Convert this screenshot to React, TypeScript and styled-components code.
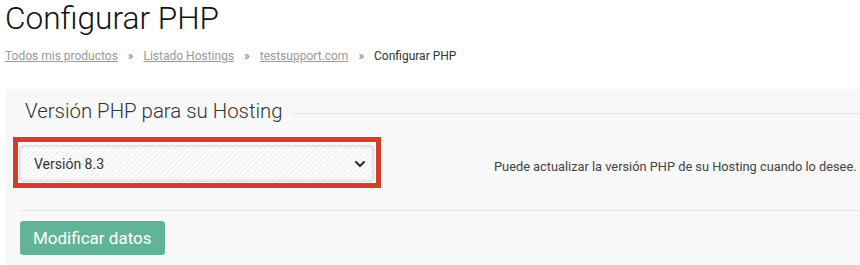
import React from "react";
import styled, { createGlobalStyle } from "styled-components";

const Global = createGlobalStyle`
  html, body { margin: 0; padding: 0; background: #fff; overflow: hidden; }
  body { font-family: Roboto, "Liberation Sans", Arial, sans-serif; color: #333; }
`;

const Page = styled.div`
  width: 860px;
  height: 265px;
  overflow: hidden;
`;

const Header = styled.header`
  padding: 0 0 0 5px;
`;

const Title = styled.h1`
  margin: 0;
  padding-top: 1px;
  font-size: 31.6px;
  line-height: 36px;
  font-weight: 300;
  color: #111;
`;

const Crumbs = styled.nav`
  display: flex;
  align-items: center;
  margin-top: 11px;
  font-size: 12px;
  line-height: 16px;
`;

const CrumbLink = styled.a`
  color: #999;
  text-decoration: underline;
  cursor: pointer;
`;

const Sep = styled.span`
  color: #777;
  padding: 0 10px 0 10px;
`;

const Current = styled.span`
  color: #333;
`;

const Panel = styled.section`
  margin: 25px -20px 0 5px;
  background: #f8f8f8;
  border-radius: 4px 0 0 0;
  padding: 9px 0 10px 15px;
  height: 180px;
  box-sizing: border-box;
`;

const LegendRow = styled.div`
  display: flex;
  align-items: center;
  gap: 8px;
  padding-left: 5px;
`;

const Legend = styled.h2`
  margin: 0;
  font-size: 20.4px;
  line-height: 26px;
  font-weight: 300;
  color: #333;
  white-space: nowrap;
`;

const LegendLine = styled.div`
  flex: 1;
  height: 1px;
  background: #e6e6e6;
  margin-top: 4px;
`;

const FieldRow = styled.div`
  display: flex;
  align-items: center;
  margin-top: 13px;
  margin-left: -7px;
`;

const Highlight = styled.div`
  border: 5px solid #d13f2b;
  padding: 3px 2px 1px 1px;
`;

const SelectBox = styled.div`
  box-sizing: border-box;
  width: 355px;
  height: 37px;
  display: flex;
  align-items: center;
  justify-content: space-between;
  padding: 0 7px 0 14px;
  border: 1px solid #dcdcdc;
  border-radius: 4px;
  background: repeating-linear-gradient(135deg, #fdfdfd 0 2px, #f4f4f4 2px 4px);
  box-shadow: inset 0 0 3px 1px rgba(0, 0, 0, 0.09);
  font-size: 14px;
  color: #333;
`;

const Help = styled.p`
  margin: 8px 0 0 113px;
  font-size: 12.8px;
  color: #444;
  white-space: nowrap;
`;

const Divider = styled.hr`
  border: 0;
  height: 1px;
  background: #e6e6e6;
  margin: 22px 0 10px 0;
`;

const Button = styled.button`
  height: 34px;
  padding: 0 13px;
  border: 0;
  border-radius: 3px;
  background: #62b499;
  color: #fff;
  font-family: Roboto, "Liberation Sans", Arial, sans-serif;
  font-size: 17px;
  cursor: pointer;
`;

const Chevron = () => (
  <svg width="12" height="8" viewBox="0 0 12 8" aria-hidden="true">
    <path d="M2 2l4 4 4-4" fill="none" stroke="#333" strokeWidth="2.2" strokeLinecap="round" strokeLinejoin="round" />
  </svg>
);

export default function App() {
  return (
    <Page>
      <Global />
      <Header>
        <Title>Configurar PHP</Title>
        <Crumbs>
          <CrumbLink>Todos mis productos</CrumbLink>
          <Sep>»</Sep>
          <CrumbLink>Listado Hostings</CrumbLink>
          <Sep>»</Sep>
          <CrumbLink>testsupport.com</CrumbLink>
          <Sep>»</Sep>
          <Current>Configurar PHP</Current>
        </Crumbs>
      </Header>
      <Panel>
        <LegendRow>
          <Legend>Versión PHP para su Hosting</Legend>
          <LegendLine />
        </LegendRow>
        <FieldRow>
          <Highlight>
            <SelectBox>
              <span>Versión 8.3</span>
              <Chevron />
            </SelectBox>
          </Highlight>
          <Help>Puede actualizar la versión PHP de su Hosting cuando lo desee.</Help>
        </FieldRow>
        <Divider />
        <Button>Modificar datos</Button>
      </Panel>
    </Page>
  );
}
